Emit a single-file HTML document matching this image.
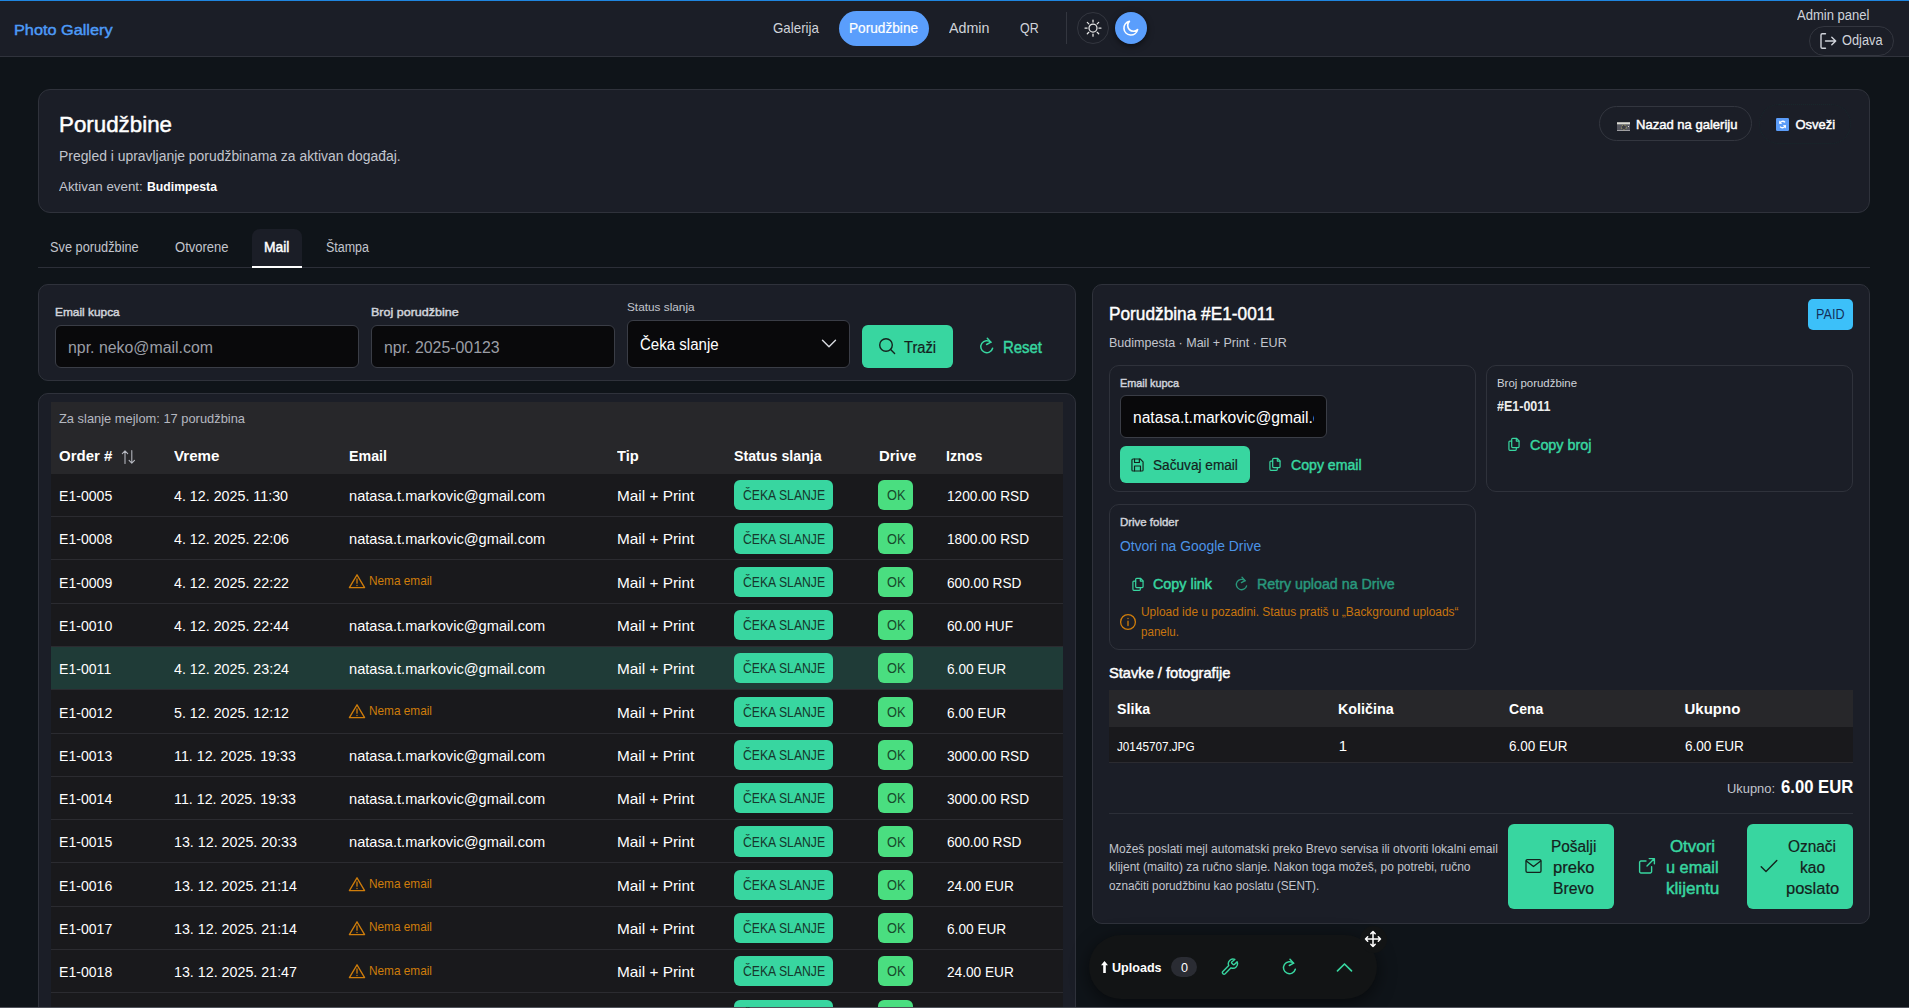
<!DOCTYPE html><html lang="sr"><head><meta charset="utf-8"><title>Photo Gallery – Porudžbine</title><style>
*{margin:0;padding:0}
html,body{width:1909px;height:1008px;overflow:hidden;background:#0f1419;}
body{position:relative;font-family:"Liberation Sans",sans-serif;}
.b{position:absolute;display:block}
.t{position:absolute;white-space:nowrap;line-height:1;display:block;transform-origin:0 0}
.c{position:absolute;overflow:hidden;display:block}
</style></head><body>
<div class="b" style="left:0px;top:0px;width:1909px;height:56.5px;background:#1b1e27;"></div>
<div class="b" style="left:0px;top:56px;width:1909px;height:1px;background:#30333c;"></div>
<div class="b" style="left:0px;top:0px;width:1909px;height:1.4px;background:#1f86e0;"></div>
<div class="b" style="left:839px;top:11px;width:90px;height:35px;background:#5a9efc;border-radius:18px;"></div>
<div class="b" style="left:1066px;top:12px;width:1px;height:32px;background:#33363f;"></div>
<div class="b" style="left:1077px;top:12px;width:32px;height:32px;border:1px solid #33363f;border-radius:16px;box-sizing:border-box;"></div>
<div class="b" style="left:1115px;top:12px;width:32px;height:32px;background:#5a9efc;border-radius:16px;box-shadow:0 2px 6px rgba(0,0,0,.55);"></div>
<div class="b" style="left:1809px;top:26px;width:85px;height:29.5px;background:#1b1e27;border:1px solid #33363f;border-radius:15px;box-sizing:border-box;"></div>
<div class="b" style="left:38px;top:89px;width:1832px;height:124px;background:#1b1e27;border:1px solid #2f323b;border-radius:12px;box-sizing:border-box;"></div>
<div class="b" style="left:1599px;top:106px;width:153px;height:35px;border:1px solid #33363f;border-radius:18px;box-sizing:border-box;"></div>
<div class="b" style="left:1759px;top:104px;width:92px;height:40px;border:1px solid #18272b;border-radius:20px;box-sizing:border-box;border-style:dotted;"></div>
<div class="b" style="left:38px;top:267px;width:1832px;height:1px;background:#2c2f38;"></div>
<div class="b" style="left:252px;top:229px;width:50px;height:39px;background:#1b1e27;border-radius:8px 8px 0 0;"></div>
<div class="b" style="left:252px;top:265.8px;width:50px;height:2.1px;background:#fff;"></div>
<div class="b" style="left:38px;top:284px;width:1038px;height:97px;background:#1b1e27;border:1px solid #2f323b;border-radius:10px;box-sizing:border-box;"></div>
<div class="b" style="left:55px;top:325px;width:304px;height:42.5px;background:#09090b;border:1px solid #3a3d46;border-radius:6px;box-sizing:border-box;"></div>
<div class="b" style="left:371px;top:325px;width:244px;height:42.5px;background:#09090b;border:1px solid #3a3d46;border-radius:6px;box-sizing:border-box;"></div>
<div class="b" style="left:627px;top:320px;width:223px;height:48px;background:#09090b;border:1px solid #3a3d46;border-radius:6px;box-sizing:border-box;"></div>
<div class="b" style="left:862px;top:325px;width:91px;height:43px;background:#38d6a0;border-radius:6px;"></div>
<div class="b" style="left:38px;top:393px;width:1038px;height:647px;background:#1b1e27;border:1px solid #2f323b;border-radius:10px;box-sizing:border-box;"></div>
<div class="b" style="left:51px;top:402px;width:1012px;height:72px;background:#27272a;"></div>
<div class="b" style="left:51px;top:474px;width:1012px;height:42px;background:#19191c;"></div>
<div class="b" style="left:51px;top:516px;width:1012px;height:1px;background:#2b2b30;"></div>
<div class="b" style="left:734px;top:480.1px;width:99px;height:30.3px;background:#38d6a0;border-radius:6px;"></div>
<div class="b" style="left:878px;top:480.1px;width:35px;height:30.3px;background:#4ade80;border-radius:6px;"></div>
<div class="b" style="left:51px;top:517px;width:1012px;height:42px;background:#19191c;"></div>
<div class="b" style="left:51px;top:559px;width:1012px;height:1px;background:#2b2b30;"></div>
<div class="b" style="left:734px;top:523.4px;width:99px;height:30.3px;background:#38d6a0;border-radius:6px;"></div>
<div class="b" style="left:878px;top:523.4px;width:35px;height:30.3px;background:#4ade80;border-radius:6px;"></div>
<div class="b" style="left:51px;top:560px;width:1012px;height:43px;background:#19191c;"></div>
<div class="b" style="left:51px;top:603px;width:1012px;height:1px;background:#2b2b30;"></div>
<div class="b" style="left:734px;top:566.7px;width:99px;height:30.3px;background:#38d6a0;border-radius:6px;"></div>
<div class="b" style="left:878px;top:566.7px;width:35px;height:30.3px;background:#4ade80;border-radius:6px;"></div>
<div class="b" style="left:51px;top:604px;width:1012px;height:42px;background:#19191c;"></div>
<div class="b" style="left:51px;top:646px;width:1012px;height:1px;background:#2b2b30;"></div>
<div class="b" style="left:734px;top:609.9px;width:99px;height:30.3px;background:#38d6a0;border-radius:6px;"></div>
<div class="b" style="left:878px;top:609.9px;width:35px;height:30.3px;background:#4ade80;border-radius:6px;"></div>
<div class="b" style="left:51px;top:647px;width:1012px;height:42px;background:#1f3b37;"></div>
<div class="b" style="left:51px;top:689px;width:1012px;height:1px;background:#2b2b30;"></div>
<div class="b" style="left:734px;top:653.2px;width:99px;height:30.3px;background:#38d6a0;border-radius:6px;"></div>
<div class="b" style="left:878px;top:653.2px;width:35px;height:30.3px;background:#4ade80;border-radius:6px;"></div>
<div class="b" style="left:51px;top:690px;width:1012px;height:43px;background:#19191c;"></div>
<div class="b" style="left:51px;top:733px;width:1012px;height:1px;background:#2b2b30;"></div>
<div class="b" style="left:734px;top:696.5px;width:99px;height:30.3px;background:#38d6a0;border-radius:6px;"></div>
<div class="b" style="left:878px;top:696.5px;width:35px;height:30.3px;background:#4ade80;border-radius:6px;"></div>
<div class="b" style="left:51px;top:734px;width:1012px;height:42px;background:#19191c;"></div>
<div class="b" style="left:51px;top:776px;width:1012px;height:1px;background:#2b2b30;"></div>
<div class="b" style="left:734px;top:739.8px;width:99px;height:30.3px;background:#38d6a0;border-radius:6px;"></div>
<div class="b" style="left:878px;top:739.8px;width:35px;height:30.3px;background:#4ade80;border-radius:6px;"></div>
<div class="b" style="left:51px;top:777px;width:1012px;height:42px;background:#19191c;"></div>
<div class="b" style="left:51px;top:819px;width:1012px;height:1px;background:#2b2b30;"></div>
<div class="b" style="left:734px;top:783.1px;width:99px;height:30.3px;background:#38d6a0;border-radius:6px;"></div>
<div class="b" style="left:878px;top:783.1px;width:35px;height:30.3px;background:#4ade80;border-radius:6px;"></div>
<div class="b" style="left:51px;top:820px;width:1012px;height:42px;background:#19191c;"></div>
<div class="b" style="left:51px;top:862px;width:1012px;height:1px;background:#2b2b30;"></div>
<div class="b" style="left:734px;top:826.3px;width:99px;height:30.3px;background:#38d6a0;border-radius:6px;"></div>
<div class="b" style="left:878px;top:826.3px;width:35px;height:30.3px;background:#4ade80;border-radius:6px;"></div>
<div class="b" style="left:51px;top:863px;width:1012px;height:43px;background:#19191c;"></div>
<div class="b" style="left:51px;top:906px;width:1012px;height:1px;background:#2b2b30;"></div>
<div class="b" style="left:734px;top:869.6px;width:99px;height:30.3px;background:#38d6a0;border-radius:6px;"></div>
<div class="b" style="left:878px;top:869.6px;width:35px;height:30.3px;background:#4ade80;border-radius:6px;"></div>
<div class="b" style="left:51px;top:907px;width:1012px;height:42px;background:#19191c;"></div>
<div class="b" style="left:51px;top:949px;width:1012px;height:1px;background:#2b2b30;"></div>
<div class="b" style="left:734px;top:912.9px;width:99px;height:30.3px;background:#38d6a0;border-radius:6px;"></div>
<div class="b" style="left:878px;top:912.9px;width:35px;height:30.3px;background:#4ade80;border-radius:6px;"></div>
<div class="b" style="left:51px;top:950px;width:1012px;height:42px;background:#19191c;"></div>
<div class="b" style="left:51px;top:992px;width:1012px;height:1px;background:#2b2b30;"></div>
<div class="b" style="left:734px;top:956.2px;width:99px;height:30.3px;background:#38d6a0;border-radius:6px;"></div>
<div class="b" style="left:878px;top:956.2px;width:35px;height:30.3px;background:#4ade80;border-radius:6px;"></div>
<div class="b" style="left:51px;top:993px;width:1012px;height:43px;background:#19191c;"></div>
<div class="b" style="left:51px;top:1036px;width:1012px;height:1px;background:#2b2b30;"></div>
<div class="b" style="left:734px;top:999.5px;width:99px;height:30.3px;background:#38d6a0;border-radius:6px;"></div>
<div class="b" style="left:878px;top:999.5px;width:35px;height:30.3px;background:#4ade80;border-radius:6px;"></div>
<div class="b" style="left:1092px;top:284px;width:778px;height:639.5px;background:#1b1e27;border:1px solid #2f323b;border-radius:10px;box-sizing:border-box;"></div>
<div class="b" style="left:1808px;top:299px;width:45px;height:31px;background:#3cc0f9;border-radius:5px;"></div>
<div class="b" style="left:1109px;top:365px;width:367px;height:126.7px;border:1px solid #2f323b;border-radius:10px;box-sizing:border-box;"></div>
<div class="b" style="left:1120px;top:395px;width:207px;height:43px;background:#09090b;border:1px solid #3a3d46;border-radius:6px;box-sizing:border-box;"></div>
<div class="b" style="left:1120px;top:446px;width:130px;height:37px;background:#38d6a0;border-radius:6px;"></div>
<div class="b" style="left:1486px;top:365px;width:367.3px;height:126.7px;border:1px solid #2f323b;border-radius:10px;box-sizing:border-box;"></div>
<div class="b" style="left:1109px;top:504px;width:367px;height:146px;border:1px solid #2f323b;border-radius:10px;box-sizing:border-box;"></div>
<div class="b" style="left:1109px;top:690px;width:744px;height:36.7px;background:#27272a;"></div>
<div class="b" style="left:1109px;top:726.7px;width:744px;height:35.6px;background:#19191c;"></div>
<div class="b" style="left:1109px;top:762.3px;width:744px;height:1.0px;background:#2b2b30;"></div>
<div class="b" style="left:1109px;top:813px;width:744px;height:1px;background:#2c2f38;"></div>
<div class="b" style="left:1508px;top:824px;width:106px;height:85px;background:#38d6a0;border-radius:6px;"></div>
<div class="b" style="left:1747px;top:824px;width:106px;height:85px;background:#38d6a0;border-radius:6px;"></div>
<div class="b" style="left:1089px;top:935px;width:288px;height:63.5px;background:#121415;border-radius:32px;box-shadow:0 4px 18px rgba(0,0,0,.55);"></div>
<div class="b" style="left:1360px;top:926px;width:27px;height:27px;background:#121415;border-radius:14px;"></div>
<div class="b" style="left:1171px;top:957.3px;width:26px;height:19.7px;background:#2a2c33;border-radius:10px;"></div>
<div class="b" style="left:0px;top:1006.6px;width:1909px;height:1.4px;background:#50535b;"></div>
<svg class="b" style="left:1084px;top:19px;" width="18" height="18" viewBox="0 0 18 18" fill="none" stroke="#e6e6e6" stroke-width="1.25" stroke-linecap="round" stroke-linejoin="round"><circle cx="9" cy="9.1" r="4"/><path d="M9 1v2.100M9 15.100v2.100M1 9.100h2.100M14.900 9.100H17M3.300 3.400l1.500 1.500M13.200 13.300l1.500 1.500M3.300 14.800l1.500-1.500M13.200 4.900l1.500-1.500"/></svg>
<svg class="b" style="left:1122px;top:19px;" width="18" height="18" viewBox="0 0 18 18" fill="none" stroke="#fff" stroke-width="1.6" stroke-linecap="round" stroke-linejoin="round"><path d="M15.6 10.6A6.9 6.9 0 1 1 7.4 2.4a5.4 5.4 0 0 0 8.2 8.2z"/></svg>
<svg class="b" style="left:1819px;top:32px;" width="18" height="18" viewBox="0 0 18 18" fill="none" stroke="#d0d3da" stroke-width="1.4" stroke-linecap="round" stroke-linejoin="round"><path d="M6.5 1.8H3.2a1.2 1.2 0 0 0-1.2 1.2v12a1.2 1.2 0 0 0 1.2 1.2h3.3M6.5 9h10M12.8 5.2l3.9 3.8-3.9 3.8"/></svg>
<svg class="b" style="left:1616.9px;top:121.8px;" width="13.2" height="9.4" viewBox="0 0 13.2 9.4" fill="none"><rect width="13.2" height="9.4" fill="#55565f"/><rect width="13.2" height="2" y=".3" fill="#dcdcd4"/><rect width="13.2" height="1" y="8.4" fill="#cfcfd2"/><circle cx="6.9" cy="5.4" r="2.4" fill="#3d3d47" stroke="#b9b46a" stroke-width=".7" stroke-dasharray="1.6 1"/><rect x="11" y="4" width="1" height="1" fill="#ddd"/></svg>
<svg class="b" style="left:1776px;top:118px;" width="13" height="13" viewBox="0 0 13 13" fill="none"><rect width="13" height="13" rx="1.2" fill="#5b9cf8"/><path d="M3.7 5.6a3 3 0 0 1 5.3-1.2M9.4 7.400a3 3 0 0 1-5.3 1.2" stroke="#fff" stroke-width="1.4" fill="none"/><path d="M3.2 2.600v3.100h3.100zM9.900 10.400V7.300H6.800z" fill="#fff"/></svg>
<svg class="b" style="left:821px;top:338px;" width="16" height="12" viewBox="0 0 16 12" fill="none" stroke="#d8dae0" stroke-width="1.4" stroke-linecap="round" stroke-linejoin="round"><path d="M1.5 2.2l6.5 6.6 6.5-6.6"/></svg>
<svg class="b" style="left:877px;top:336px;" width="20" height="20" viewBox="0 0 20 20" fill="none" stroke="#14221d" stroke-width="1.4" stroke-linecap="round" stroke-linejoin="round"><circle cx="9" cy="9" r="6.3"/><path d="M13.6 13.6l4 4"/></svg>
<svg class="b" style="left:978px;top:337px;" width="18" height="18" viewBox="0 0 18 18" fill="none" stroke="#38d6a0" stroke-width="1.5" stroke-linecap="round" stroke-linejoin="round"><path d="M14.6 11.2a6 6 0 1 1-1.7-5.9"/><path d="M9.3 1.3l3.6 3.9-4.3 2.3"/></svg>
<svg class="b" style="left:121px;top:449px;" width="15" height="16" viewBox="0 0 15 16" fill="none" stroke="#b8bac2" stroke-width="1.05" stroke-linecap="round" stroke-linejoin="round"><path d="M4 14.5V2M1.3 4.6L4 1.8l2.7 2.8M10.8 1.5V14M8.1 11.4l2.7 2.8 2.7-2.8"/></svg>
<svg class="b" style="left:347.7px;top:573.3px;" width="18" height="16" viewBox="0 0 18 16" fill="none" stroke="#cf7d0b" stroke-width="1.3" stroke-linecap="round" stroke-linejoin="round"><path d="M9 1.800L1.400 14.600h15.200z"/><path d="M9 6v4.200M9 12.300v.3"/></svg>
<svg class="b" style="left:347.7px;top:703.1px;" width="18" height="16" viewBox="0 0 18 16" fill="none" stroke="#cf7d0b" stroke-width="1.3" stroke-linecap="round" stroke-linejoin="round"><path d="M9 1.800L1.400 14.600h15.200z"/><path d="M9 6v4.200M9 12.300v.3"/></svg>
<svg class="b" style="left:347.7px;top:876.2px;" width="18" height="16" viewBox="0 0 18 16" fill="none" stroke="#cf7d0b" stroke-width="1.3" stroke-linecap="round" stroke-linejoin="round"><path d="M9 1.800L1.400 14.600h15.200z"/><path d="M9 6v4.200M9 12.300v.3"/></svg>
<svg class="b" style="left:347.7px;top:919.5px;" width="18" height="16" viewBox="0 0 18 16" fill="none" stroke="#cf7d0b" stroke-width="1.3" stroke-linecap="round" stroke-linejoin="round"><path d="M9 1.800L1.400 14.600h15.200z"/><path d="M9 6v4.200M9 12.300v.3"/></svg>
<svg class="b" style="left:347.7px;top:962.8px;" width="18" height="16" viewBox="0 0 18 16" fill="none" stroke="#cf7d0b" stroke-width="1.3" stroke-linecap="round" stroke-linejoin="round"><path d="M9 1.800L1.400 14.600h15.200z"/><path d="M9 6v4.200M9 12.300v.3"/></svg>
<svg class="b" style="left:1131.3px;top:457.8px;" width="13" height="14" viewBox="0 0 14 15" fill="none" stroke="#14221d" stroke-width="1.25" stroke-linecap="round" stroke-linejoin="round"><path d="M1 2.2a1.2 1.2 0 0 1 1.2-1.2h7.6L13 4.2v8.6a1.2 1.2 0 0 1-1.2 1.2H2.2A1.2 1.2 0 0 1 1 12.800z"/><path d="M3.8 1.2v3.6h5.2V1.2M3.8 13.8V8.6h6.4v5.2"/></svg>
<svg class="b" style="left:1269.4px;top:457.3px;" width="12" height="14.6" viewBox="0 0 13 15" fill="none" stroke="#38d6a0" stroke-width="1.3" stroke-linecap="round" stroke-linejoin="round"><path d="M4 3.2V2a1 1 0 0 1 1-1h4.2L12 3.800V10a1 1 0 0 1-1 1H5a1 1 0 0 1-1-1z"/><path d="M9 1.2v2.800h2.800"/><path d="M4 4H2a1 1 0 0 0-1 1v8a1 1 0 0 0 1 1h6a1 1 0 0 0 1-1v-2"/></svg>
<svg class="b" style="left:1508.4px;top:436.5px;" width="12" height="14.6" viewBox="0 0 13 15" fill="none" stroke="#38d6a0" stroke-width="1.3" stroke-linecap="round" stroke-linejoin="round"><path d="M4 3.2V2a1 1 0 0 1 1-1h4.2L12 3.800V10a1 1 0 0 1-1 1H5a1 1 0 0 1-1-1z"/><path d="M9 1.2v2.800h2.800"/><path d="M4 4H2a1 1 0 0 0-1 1v8a1 1 0 0 0 1 1h6a1 1 0 0 0 1-1v-2"/></svg>
<svg class="b" style="left:1131.9px;top:576.5px;" width="12" height="14.6" viewBox="0 0 13 15" fill="none" stroke="#38d6a0" stroke-width="1.3" stroke-linecap="round" stroke-linejoin="round"><path d="M4 3.2V2a1 1 0 0 1 1-1h4.2L12 3.800V10a1 1 0 0 1-1 1H5a1 1 0 0 1-1-1z"/><path d="M9 1.2v2.800h2.800"/><path d="M4 4H2a1 1 0 0 0-1 1v8a1 1 0 0 0 1 1h6a1 1 0 0 0 1-1v-2"/></svg>
<svg class="b" style="left:1234px;top:576px;" width="15" height="16" viewBox="0 0 15 16" fill="none" stroke="#29987c" stroke-width="1.3" stroke-linecap="round" stroke-linejoin="round"><path d="M12.6 9.8a5.200 5.200 0 1 1-1.500-5.100"/><path d="M8 1.2l3.100 3.400-3.700 2"/></svg>
<svg class="b" style="left:1119px;top:613px;" width="18" height="18" viewBox="0 0 18 18" fill="none" stroke="#cf7d0b" stroke-width="1.3" stroke-linecap="round" stroke-linejoin="round"><circle cx="9" cy="9" r="7.4"/><path d="M9 8.200v4.300M9 5.300v.2"/></svg>
<svg class="b" style="left:1524.5px;top:858px;" width="17" height="16" viewBox="0 0 17 16" fill="none" stroke="#14221d" stroke-width="1.3" stroke-linecap="round" stroke-linejoin="round"><rect x="1" y="1.6" width="15" height="12.800" rx="1.4"/><path d="M1.3 3l7.200 5.600L15.700 3"/></svg>
<svg class="b" style="left:1638px;top:857px;" width="18" height="18" viewBox="0 0 18 18" fill="none" stroke="#38d6a0" stroke-width="1.4" stroke-linecap="round" stroke-linejoin="round"><path d="M13.6 9.600v5a1.400 1.400 0 0 1-1.400 1.400H3a1.400 1.400 0 0 1-1.400-1.400V5.400A1.400 1.400 0 0 1 3 4h5"/><path d="M11.200 1.600h5.200v5.200M16.200 1.800L9 9"/></svg>
<svg class="b" style="left:1759.5px;top:859px;" width="18" height="14" viewBox="0 0 18 14" fill="none" stroke="#14221d" stroke-width="1.4" stroke-linecap="round" stroke-linejoin="round"><path d="M1.200 7.800l4.800 4.800L16.800 1.600"/></svg>
<svg class="b" style="left:1363.7px;top:929.7px;" width="18" height="18" viewBox="0 0 18 18" fill="none" stroke="#fff" stroke-width="1.5" stroke-linecap="round" stroke-linejoin="round"><path d="M9 1.500v15M1.500 9h15M6.800 3.700L9 1.500l2.200 2.200M6.800 14.300L9 16.500l2.200-2.200M3.700 6.800L1.500 9l2.200 2.200M14.300 6.800L16.500 9l-2.200 2.200"/></svg>
<svg class="b" style="left:1100.5px;top:961px;" width="7" height="12" viewBox="0 0 7 12" fill="none"><path d="M3.500 0L7 4.200H4.800V12H2.200V4.200H0z" fill="#fff"/></svg>
<svg class="b" style="left:1220px;top:958px;" width="19" height="18" viewBox="0 0 19 18" fill="none" stroke="#38d6a0" stroke-width="1.5" stroke-linecap="round" stroke-linejoin="round"><path d="M12.300 4.900a.9.900 0 0 0 0 1.300l1.500 1.500a.9.900 0 0 0 1.300 0l3-3a5 5 0 0 1-6.600 6.600l-6.400 6.400a1.770 1.770 0 0 1-2.500-2.500l6.400-6.400a5 5 0 0 1 6.600-6.600z" transform="scale(.92) translate(.5 -.6)"/></svg>
<svg class="b" style="left:1281px;top:958px;" width="17" height="18" viewBox="0 0 17 18" fill="none" stroke="#38d6a0" stroke-width="1.5" stroke-linecap="round" stroke-linejoin="round"><path d="M14.300 11.200a6 6 0 1 1-1.700-5.900"/><path d="M9 1.300l3.600 3.900-4.300 2.300"/></svg>
<svg class="b" style="left:1335.5px;top:962px;" width="17" height="11" viewBox="0 0 17 11" fill="none" stroke="#38d6a0" stroke-width="1.7" stroke-linecap="round" stroke-linejoin="round"><path d="M1.500 8.800l7-6.800 7 6.800"/></svg>
<span class="t" style="left:14.2px;top:22px;font-size:15.5px;color:#4d9bf7;-webkit-text-stroke:.45px;transform:scaleX(1.0498);">Photo Gallery</span>
<span class="t" style="left:772.7px;top:20px;font-size:15px;color:#d0d3da;transform:scaleX(0.8880);">Galerija</span>
<span class="t" style="left:849.4px;top:20px;font-size:15px;color:#fff;-webkit-text-stroke:.2px;transform:scaleX(0.9105);">Porudžbine</span>
<span class="t" style="left:948.7px;top:20px;font-size:15px;color:#d0d3da;transform:scaleX(0.9522);">Admin</span>
<span class="t" style="left:1019.5px;top:20px;font-size:15px;color:#d0d3da;transform:scaleX(0.8311);">QR</span>
<span class="t" style="left:1796.9px;top:8px;font-size:14px;color:#d0d3da;transform:scaleX(0.9315);">Admin panel</span>
<span class="t" style="left:1842.3px;top:33px;font-size:14px;color:#d0d3da;transform:scaleX(0.9130);">Odjava</span>
<span class="t" style="left:59.3px;top:114px;font-size:22.5px;color:#fff;-webkit-text-stroke:.45px;transform:scaleX(0.9926);">Porudžbine</span>
<span class="t" style="left:59.3px;top:149px;font-size:14px;color:#c2c5cd;transform:scaleX(0.9933);">Pregled i upravljanje porudžbinama za aktivan događaj.</span>
<span class="t" style="left:59.3px;top:180px;font-size:13px;color:#c2c5cd;transform:scaleX(1.0250);">Aktivan event:</span>
<span class="t" style="left:146.7px;top:180px;font-size:13px;color:#fff;font-weight:700;transform:scaleX(0.9408);">Budimpesta</span>
<span class="t" style="left:1635.5px;top:118px;font-size:13px;color:#fff;-webkit-text-stroke:.45px;transform:scaleX(1.0031);">Nazad na galeriju</span>
<span class="t" style="left:1795.5px;top:118px;font-size:13px;color:#fff;-webkit-text-stroke:.45px;">Osveži</span>
<span class="t" style="left:50px;top:240px;font-size:14px;color:#c2c5cd;transform:scaleX(0.9116);">Sve porudžbine</span>
<span class="t" style="left:174.7px;top:240px;font-size:14px;color:#c2c5cd;transform:scaleX(0.9307);">Otvorene</span>
<span class="t" style="left:264.3px;top:240px;font-size:14px;color:#fff;-webkit-text-stroke:.45px;transform:scaleX(0.9894);">Mail</span>
<span class="t" style="left:325.7px;top:240px;font-size:14px;color:#c2c5cd;transform:scaleX(0.8912);">Štampa</span>
<span class="t" style="left:55.3px;top:307px;font-size:11.5px;color:#d0d3da;-webkit-text-stroke:.45px;transform:scaleX(1.0329);">Email kupca</span>
<span class="t" style="left:68.3px;top:340px;font-size:16px;color:#9b9ea6;transform:scaleX(0.9926);">npr. neko@mail.com</span>
<span class="t" style="left:371.3px;top:307px;font-size:11.5px;color:#d0d3da;-webkit-text-stroke:.45px;transform:scaleX(1.0886);">Broj porudžbine</span>
<span class="t" style="left:384.3px;top:340px;font-size:16px;color:#9b9ea6;transform:scaleX(0.9927);">npr. 2025-00123</span>
<span class="t" style="left:626.7px;top:302px;font-size:11.5px;color:#c2c5cd;transform:scaleX(1.0264);">Status slanja</span>
<span class="t" style="left:639.7px;top:337px;font-size:16px;color:#fff;transform:scaleX(0.9401);">Čeka slanje</span>
<span class="t" style="left:903.5px;top:340px;font-size:16px;color:#14221d;-webkit-text-stroke:.2px;transform:scaleX(0.9180);">Traži</span>
<span class="t" style="left:1003px;top:340px;font-size:16px;color:#38d6a0;-webkit-text-stroke:.45px;transform:scaleX(0.9331);">Reset</span>
<span class="t" style="left:59px;top:412px;font-size:13px;color:#b5b8c0;transform:scaleX(0.9899);">Za slanje mejlom: 17 porudžbina</span>
<span class="t" style="left:59px;top:448px;font-size:15px;color:#fff;font-weight:700;">Order #</span>
<span class="t" style="left:174.3px;top:448px;font-size:15px;color:#fff;font-weight:700;transform:scaleX(1.0078);">Vreme</span>
<span class="t" style="left:348.7px;top:448px;font-size:15px;color:#fff;font-weight:700;transform:scaleX(0.9493);">Email</span>
<span class="t" style="left:616.7px;top:448px;font-size:15px;color:#fff;font-weight:700;transform:scaleX(0.9805);">Tip</span>
<span class="t" style="left:734.3px;top:448px;font-size:15px;color:#fff;font-weight:700;transform:scaleX(0.9476);">Status slanja</span>
<span class="t" style="left:878.7px;top:448px;font-size:15px;color:#fff;font-weight:700;transform:scaleX(0.9938);">Drive</span>
<span class="t" style="left:946.3px;top:448px;font-size:15px;color:#fff;font-weight:700;transform:scaleX(0.9493);">Iznos</span>
<span class="t" style="left:59px;top:488px;font-size:15px;color:#fff;transform:scaleX(0.9397);">E1-0005</span>
<span class="t" style="left:174.3px;top:488px;font-size:15px;color:#fff;transform:scaleX(0.9514);">4. 12. 2025. 11:30</span>
<span class="t" style="left:348.7px;top:488px;font-size:15px;color:#fff;transform:scaleX(0.9760);">natasa.t.markovic@gmail.com</span>
<span class="t" style="left:616.7px;top:488px;font-size:15px;color:#fff;transform:scaleX(1.0245);">Mail + Print</span>
<span class="t" style="left:742.6px;top:488px;font-size:14px;color:#16382d;transform:scaleX(0.8720);">ČEKA SLANJE</span>
<span class="t" style="left:886.7px;top:488px;font-size:14px;color:#174a2c;transform:scaleX(0.9143);">OK</span>
<span class="t" style="left:947.1px;top:488px;font-size:15px;color:#fff;transform:scaleX(0.9105);">1200.00 RSD</span>
<span class="t" style="left:59px;top:531px;font-size:15px;color:#fff;transform:scaleX(0.9397);">E1-0008</span>
<span class="t" style="left:174.3px;top:531px;font-size:15px;color:#fff;transform:scaleX(0.9514);">4. 12. 2025. 22:06</span>
<span class="t" style="left:348.7px;top:531px;font-size:15px;color:#fff;transform:scaleX(0.9760);">natasa.t.markovic@gmail.com</span>
<span class="t" style="left:616.7px;top:531px;font-size:15px;color:#fff;transform:scaleX(1.0245);">Mail + Print</span>
<span class="t" style="left:742.6px;top:532px;font-size:14px;color:#16382d;transform:scaleX(0.8720);">ČEKA SLANJE</span>
<span class="t" style="left:886.7px;top:532px;font-size:14px;color:#174a2c;transform:scaleX(0.9143);">OK</span>
<span class="t" style="left:947.1px;top:531px;font-size:15px;color:#fff;transform:scaleX(0.9105);">1800.00 RSD</span>
<span class="t" style="left:59px;top:575px;font-size:15px;color:#fff;transform:scaleX(0.9397);">E1-0009</span>
<span class="t" style="left:174.3px;top:575px;font-size:15px;color:#fff;transform:scaleX(0.9514);">4. 12. 2025. 22:22</span>
<span class="t" style="left:369.1px;top:574px;font-size:13px;color:#cf7d0b;transform:scaleX(0.9083);">Nema email</span>
<span class="t" style="left:616.7px;top:575px;font-size:15px;color:#fff;transform:scaleX(1.0245);">Mail + Print</span>
<span class="t" style="left:742.6px;top:575px;font-size:14px;color:#16382d;transform:scaleX(0.8720);">ČEKA SLANJE</span>
<span class="t" style="left:886.7px;top:575px;font-size:14px;color:#174a2c;transform:scaleX(0.9143);">OK</span>
<span class="t" style="left:947.1px;top:575px;font-size:15px;color:#fff;transform:scaleX(0.9105);">600.00 RSD</span>
<span class="t" style="left:59px;top:618px;font-size:15px;color:#fff;transform:scaleX(0.9397);">E1-0010</span>
<span class="t" style="left:174.3px;top:618px;font-size:15px;color:#fff;transform:scaleX(0.9514);">4. 12. 2025. 22:44</span>
<span class="t" style="left:348.7px;top:618px;font-size:15px;color:#fff;transform:scaleX(0.9760);">natasa.t.markovic@gmail.com</span>
<span class="t" style="left:616.7px;top:618px;font-size:15px;color:#fff;transform:scaleX(1.0245);">Mail + Print</span>
<span class="t" style="left:742.6px;top:618px;font-size:14px;color:#16382d;transform:scaleX(0.8720);">ČEKA SLANJE</span>
<span class="t" style="left:886.7px;top:618px;font-size:14px;color:#174a2c;transform:scaleX(0.9143);">OK</span>
<span class="t" style="left:947.1px;top:618px;font-size:15px;color:#fff;transform:scaleX(0.9105);">60.00 HUF</span>
<span class="t" style="left:59px;top:661px;font-size:15px;color:#fff;transform:scaleX(0.9397);">E1-0011</span>
<span class="t" style="left:174.3px;top:661px;font-size:15px;color:#fff;transform:scaleX(0.9514);">4. 12. 2025. 23:24</span>
<span class="t" style="left:348.7px;top:661px;font-size:15px;color:#fff;transform:scaleX(0.9760);">natasa.t.markovic@gmail.com</span>
<span class="t" style="left:616.7px;top:661px;font-size:15px;color:#fff;transform:scaleX(1.0245);">Mail + Print</span>
<span class="t" style="left:742.6px;top:661px;font-size:14px;color:#16382d;transform:scaleX(0.8720);">ČEKA SLANJE</span>
<span class="t" style="left:886.7px;top:661px;font-size:14px;color:#174a2c;transform:scaleX(0.9143);">OK</span>
<span class="t" style="left:947.1px;top:661px;font-size:15px;color:#fff;transform:scaleX(0.9105);">6.00 EUR</span>
<span class="t" style="left:59px;top:705px;font-size:15px;color:#fff;transform:scaleX(0.9397);">E1-0012</span>
<span class="t" style="left:174.3px;top:705px;font-size:15px;color:#fff;transform:scaleX(0.9514);">5. 12. 2025. 12:12</span>
<span class="t" style="left:369.1px;top:704px;font-size:13px;color:#cf7d0b;transform:scaleX(0.9083);">Nema email</span>
<span class="t" style="left:616.7px;top:705px;font-size:15px;color:#fff;transform:scaleX(1.0245);">Mail + Print</span>
<span class="t" style="left:742.6px;top:705px;font-size:14px;color:#16382d;transform:scaleX(0.8720);">ČEKA SLANJE</span>
<span class="t" style="left:886.7px;top:705px;font-size:14px;color:#174a2c;transform:scaleX(0.9143);">OK</span>
<span class="t" style="left:947.1px;top:705px;font-size:15px;color:#fff;transform:scaleX(0.9105);">6.00 EUR</span>
<span class="t" style="left:59px;top:748px;font-size:15px;color:#fff;transform:scaleX(0.9397);">E1-0013</span>
<span class="t" style="left:174.3px;top:748px;font-size:15px;color:#fff;transform:scaleX(0.9514);">11. 12. 2025. 19:33</span>
<span class="t" style="left:348.7px;top:748px;font-size:15px;color:#fff;transform:scaleX(0.9760);">natasa.t.markovic@gmail.com</span>
<span class="t" style="left:616.7px;top:748px;font-size:15px;color:#fff;transform:scaleX(1.0245);">Mail + Print</span>
<span class="t" style="left:742.6px;top:748px;font-size:14px;color:#16382d;transform:scaleX(0.8720);">ČEKA SLANJE</span>
<span class="t" style="left:886.7px;top:748px;font-size:14px;color:#174a2c;transform:scaleX(0.9143);">OK</span>
<span class="t" style="left:947.1px;top:748px;font-size:15px;color:#fff;transform:scaleX(0.9105);">3000.00 RSD</span>
<span class="t" style="left:59px;top:791px;font-size:15px;color:#fff;transform:scaleX(0.9397);">E1-0014</span>
<span class="t" style="left:174.3px;top:791px;font-size:15px;color:#fff;transform:scaleX(0.9514);">11. 12. 2025. 19:33</span>
<span class="t" style="left:348.7px;top:791px;font-size:15px;color:#fff;transform:scaleX(0.9760);">natasa.t.markovic@gmail.com</span>
<span class="t" style="left:616.7px;top:791px;font-size:15px;color:#fff;transform:scaleX(1.0245);">Mail + Print</span>
<span class="t" style="left:742.6px;top:791px;font-size:14px;color:#16382d;transform:scaleX(0.8720);">ČEKA SLANJE</span>
<span class="t" style="left:886.7px;top:791px;font-size:14px;color:#174a2c;transform:scaleX(0.9143);">OK</span>
<span class="t" style="left:947.1px;top:791px;font-size:15px;color:#fff;transform:scaleX(0.9105);">3000.00 RSD</span>
<span class="t" style="left:59px;top:834px;font-size:15px;color:#fff;transform:scaleX(0.9397);">E1-0015</span>
<span class="t" style="left:174.3px;top:834px;font-size:15px;color:#fff;transform:scaleX(0.9514);">13. 12. 2025. 20:33</span>
<span class="t" style="left:348.7px;top:834px;font-size:15px;color:#fff;transform:scaleX(0.9760);">natasa.t.markovic@gmail.com</span>
<span class="t" style="left:616.7px;top:834px;font-size:15px;color:#fff;transform:scaleX(1.0245);">Mail + Print</span>
<span class="t" style="left:742.6px;top:835px;font-size:14px;color:#16382d;transform:scaleX(0.8720);">ČEKA SLANJE</span>
<span class="t" style="left:886.7px;top:835px;font-size:14px;color:#174a2c;transform:scaleX(0.9143);">OK</span>
<span class="t" style="left:947.1px;top:834px;font-size:15px;color:#fff;transform:scaleX(0.9105);">600.00 RSD</span>
<span class="t" style="left:59px;top:878px;font-size:15px;color:#fff;transform:scaleX(0.9397);">E1-0016</span>
<span class="t" style="left:174.3px;top:878px;font-size:15px;color:#fff;transform:scaleX(0.9514);">13. 12. 2025. 21:14</span>
<span class="t" style="left:369.1px;top:877px;font-size:13px;color:#cf7d0b;transform:scaleX(0.9083);">Nema email</span>
<span class="t" style="left:616.7px;top:878px;font-size:15px;color:#fff;transform:scaleX(1.0245);">Mail + Print</span>
<span class="t" style="left:742.6px;top:878px;font-size:14px;color:#16382d;transform:scaleX(0.8720);">ČEKA SLANJE</span>
<span class="t" style="left:886.7px;top:878px;font-size:14px;color:#174a2c;transform:scaleX(0.9143);">OK</span>
<span class="t" style="left:947.1px;top:878px;font-size:15px;color:#fff;transform:scaleX(0.9105);">24.00 EUR</span>
<span class="t" style="left:59px;top:921px;font-size:15px;color:#fff;transform:scaleX(0.9397);">E1-0017</span>
<span class="t" style="left:174.3px;top:921px;font-size:15px;color:#fff;transform:scaleX(0.9514);">13. 12. 2025. 21:14</span>
<span class="t" style="left:369.1px;top:920px;font-size:13px;color:#cf7d0b;transform:scaleX(0.9083);">Nema email</span>
<span class="t" style="left:616.7px;top:921px;font-size:15px;color:#fff;transform:scaleX(1.0245);">Mail + Print</span>
<span class="t" style="left:742.6px;top:921px;font-size:14px;color:#16382d;transform:scaleX(0.8720);">ČEKA SLANJE</span>
<span class="t" style="left:886.7px;top:921px;font-size:14px;color:#174a2c;transform:scaleX(0.9143);">OK</span>
<span class="t" style="left:947.1px;top:921px;font-size:15px;color:#fff;transform:scaleX(0.9105);">6.00 EUR</span>
<span class="t" style="left:59px;top:964px;font-size:15px;color:#fff;transform:scaleX(0.9397);">E1-0018</span>
<span class="t" style="left:174.3px;top:964px;font-size:15px;color:#fff;transform:scaleX(0.9514);">13. 12. 2025. 21:47</span>
<span class="t" style="left:369.1px;top:964px;font-size:13px;color:#cf7d0b;transform:scaleX(0.9083);">Nema email</span>
<span class="t" style="left:616.7px;top:964px;font-size:15px;color:#fff;transform:scaleX(1.0245);">Mail + Print</span>
<span class="t" style="left:742.6px;top:964px;font-size:14px;color:#16382d;transform:scaleX(0.8720);">ČEKA SLANJE</span>
<span class="t" style="left:886.7px;top:964px;font-size:14px;color:#174a2c;transform:scaleX(0.9143);">OK</span>
<span class="t" style="left:947.1px;top:964px;font-size:15px;color:#fff;transform:scaleX(0.9105);">24.00 EUR</span>
<span class="t" style="left:59px;top:1007px;font-size:15px;color:#fff;transform:scaleX(0.9397);">E1-0019</span>
<span class="t" style="left:174.3px;top:1007px;font-size:15px;color:#fff;transform:scaleX(0.9514);">13. 12. 2025. 22:05</span>
<span class="t" style="left:348.7px;top:1007px;font-size:15px;color:#fff;transform:scaleX(0.9760);">natasa.t.markovic@gmail.com</span>
<span class="t" style="left:616.7px;top:1007px;font-size:15px;color:#fff;transform:scaleX(1.0245);">Mail + Print</span>
<span class="t" style="left:742.6px;top:1008px;font-size:14px;color:#16382d;transform:scaleX(0.8720);">ČEKA SLANJE</span>
<span class="t" style="left:886.7px;top:1008px;font-size:14px;color:#174a2c;transform:scaleX(0.9143);">OK</span>
<span class="t" style="left:947.1px;top:1007px;font-size:15px;color:#fff;transform:scaleX(0.9105);">12.00 EUR</span>
<span class="t" style="left:1109.3px;top:305px;font-size:18.5px;color:#fff;-webkit-text-stroke:.45px;transform:scaleX(0.9330);">Porudžbina #E1-0011</span>
<span class="t" style="left:1109.3px;top:336px;font-size:13px;color:#c2c5cd;transform:scaleX(0.9627);">Budimpesta · Mail + Print · EUR</span>
<span class="t" style="left:1816px;top:307px;font-size:14px;color:#14305a;transform:scaleX(0.9007);">PAID</span>
<span class="t" style="left:1120.3px;top:378px;font-size:11.5px;color:#d0d3da;-webkit-text-stroke:.45px;transform:scaleX(0.9419);">Email kupca</span>
<span class="c" style="left:1133px;top:406px;width:181px;height:24px;"><span class="t" style="left:0;top:4px;font-size:16px;color:#fff;transform:scaleX(0.9761);">natasa.t.markovic@gmail.com</span></span>
<span class="t" style="left:1153.1px;top:458px;font-size:14px;color:#14221d;-webkit-text-stroke:.2px;transform:scaleX(0.9741);">Sačuvaj email</span>
<span class="t" style="left:1290.7px;top:458px;font-size:14px;color:#38d6a0;-webkit-text-stroke:.45px;transform:scaleX(1.0081);">Copy email</span>
<span class="t" style="left:1497px;top:378px;font-size:11.5px;color:#d0d3da;transform:scaleX(0.9930);">Broj porudžbine</span>
<span class="t" style="left:1497px;top:399px;font-size:14px;color:#ececec;font-weight:700;transform:scaleX(0.8924);">#E1-0011</span>
<span class="t" style="left:1530px;top:438px;font-size:14px;color:#38d6a0;-webkit-text-stroke:.45px;transform:scaleX(1.0263);">Copy broj</span>
<span class="t" style="left:1120.3px;top:517px;font-size:11.5px;color:#d0d3da;-webkit-text-stroke:.45px;transform:scaleX(0.9947);">Drive folder</span>
<span class="t" style="left:1120.3px;top:539px;font-size:14px;color:#4b93e6;transform:scaleX(0.9915);">Otvori na Google Drive</span>
<span class="t" style="left:1153px;top:577px;font-size:14px;color:#38d6a0;-webkit-text-stroke:.45px;transform:scaleX(1.0244);">Copy link</span>
<span class="t" style="left:1256.5px;top:577px;font-size:14px;color:#29987c;-webkit-text-stroke:.45px;transform:scaleX(1.0177);">Retry upload na Drive</span>
<span class="t" style="left:1140.5px;top:606px;font-size:12px;color:#c8750e;transform:scaleX(0.9936);">Upload ide u pozadini. Status pratiš u „Background uploads“</span>
<span class="t" style="left:1140.5px;top:626px;font-size:12px;color:#c8750e;transform:scaleX(0.9651);">panelu.</span>
<span class="t" style="left:1109px;top:666px;font-size:14px;color:#fff;-webkit-text-stroke:.45px;transform:scaleX(1.0461);">Stavke / fotografije</span>
<span class="t" style="left:1116.8px;top:701px;font-size:15px;color:#fff;font-weight:700;transform:scaleX(0.9477);">Slika</span>
<span class="t" style="left:1338.3px;top:701px;font-size:15px;color:#fff;font-weight:700;transform:scaleX(0.9544);">Količina</span>
<span class="t" style="left:1508.5px;top:701px;font-size:15px;color:#fff;font-weight:700;transform:scaleX(0.9349);">Cena</span>
<span class="t" style="left:1684.5px;top:701px;font-size:15px;color:#fff;font-weight:700;">Ukupno</span>
<span class="t" style="left:1116.8px;top:741px;font-size:12.5px;color:#fff;transform:scaleX(0.9371);">J0145707.JPG</span>
<span class="t" style="left:1338.8px;top:738px;font-size:15px;color:#fff;">1</span>
<span class="t" style="left:1508.5px;top:738px;font-size:15px;color:#fff;transform:scaleX(0.8994);">6.00 EUR</span>
<span class="t" style="left:1684.5px;top:738px;font-size:15px;color:#fff;transform:scaleX(0.9040);">6.00 EUR</span>
<span class="t" style="left:1726.5px;top:782px;font-size:13px;color:#c2c5cd;transform:scaleX(0.9913);">Ukupno:</span>
<span class="t" style="left:1780.8px;top:778px;font-size:18.5px;color:#fff;font-weight:700;transform:scaleX(0.9000);">6.00 EUR</span>
<span class="t" style="left:1109px;top:843px;font-size:12px;color:#c2c5cd;">Možeš poslati mejl automatski preko Brevo servisa ili otvoriti lokalni email</span>
<span class="t" style="left:1109px;top:861px;font-size:12px;color:#c2c5cd;">klijent (mailto) za ručno slanje. Nakon toga možeš, po potrebi, ručno</span>
<span class="t" style="left:1109px;top:880px;font-size:12px;color:#c2c5cd;transform:scaleX(0.9791);">označiti porudžbinu kao poslatu (SENT).</span>
<span class="t" style="left:1550.5px;top:839px;font-size:16px;color:#14221d;-webkit-text-stroke:.2px;transform:scaleX(0.9610);">Pošalji</span>
<span class="t" style="left:1552.5px;top:860px;font-size:16px;color:#14221d;-webkit-text-stroke:.2px;transform:scaleX(1.0367);">preko</span>
<span class="t" style="left:1552.8px;top:881px;font-size:16px;color:#14221d;-webkit-text-stroke:.2px;transform:scaleX(0.9809);">Brevo</span>
<span class="t" style="left:1669.5px;top:839px;font-size:16px;color:#38d6a0;-webkit-text-stroke:.45px;transform:scaleX(1.0546);">Otvori</span>
<span class="t" style="left:1666px;top:860px;font-size:16px;color:#38d6a0;-webkit-text-stroke:.45px;transform:scaleX(1.0179);">u email</span>
<span class="t" style="left:1665.8px;top:881px;font-size:16px;color:#38d6a0;-webkit-text-stroke:.45px;transform:scaleX(1.0680);">klijentu</span>
<span class="t" style="left:1788px;top:839px;font-size:16px;color:#14221d;-webkit-text-stroke:.2px;transform:scaleX(0.9639);">Označi</span>
<span class="t" style="left:1799.5px;top:860px;font-size:16px;color:#14221d;-webkit-text-stroke:.2px;transform:scaleX(0.9691);">kao</span>
<span class="t" style="left:1785.8px;top:881px;font-size:16px;color:#14221d;-webkit-text-stroke:.2px;transform:scaleX(1.0311);">poslato</span>
<span class="t" style="left:1111.7px;top:961px;font-size:13px;color:#fff;font-weight:700;transform:scaleX(0.9669);">Uploads</span>
<span class="t" style="left:1180.7px;top:961px;font-size:13px;color:#fff;transform:scaleX(0.9676);">0</span>
</body></html>
